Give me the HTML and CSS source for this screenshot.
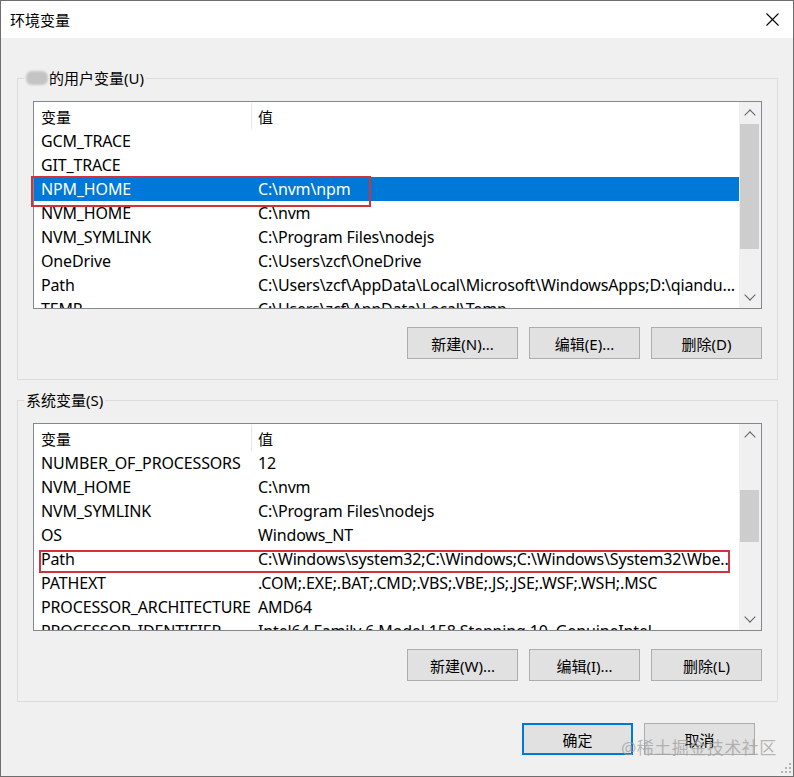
FILE: index.html
```html
<!DOCTYPE html>
<html lang="zh-CN">
<head>
  <meta charset="UTF-8" />
  <title>环境变量</title>
  <link rel="stylesheet" href="styles.css">
</head>
<body>
  <div class="window">
    <div class="titlebar">
      <span class="title">环境变量</span>
      <span class="close">
        <svg width="13" height="13" viewBox="0 0 13 13"><path d="M0.5 0.5 L12.5 12.5 M12.5 0.5 L0.5 12.5" stroke="#000" stroke-width="1.1" fill="none"/></svg>
      </span>
    </div>

    <div class="content">
      <!-- user variables -->
      <fieldset class="group">
        <legend><span class="blur-name"></span>的用户变量(<u>U</u>)</legend>
        <div class="list">
          <div class="list-body">
            <div class="list-head">
              <div class="cell">变量</div>
              <div class="cell sep">值</div>
            </div>
            <div class="row"><div class="cell">GCM_TRACE</div><div class="cell"></div></div>
            <div class="row"><div class="cell">GIT_TRACE</div><div class="cell"></div></div>
            <div class="row selected"><div class="cell">NPM_HOME</div><div class="cell">C:\nvm\npm</div></div>
            <div class="row"><div class="cell">NVM_HOME</div><div class="cell">C:\nvm</div></div>
            <div class="row"><div class="cell">NVM_SYMLINK</div><div class="cell">C:\Program Files\nodejs</div></div>
            <div class="row"><div class="cell">OneDrive</div><div class="cell">C:\Users\zcf\OneDrive</div></div>
            <div class="row"><div class="cell">Path</div><div class="cell">C:\Users\zcf\AppData\Local\Microsoft\WindowsApps;D:\qiandu...</div></div>
            <div class="row"><div class="cell">TEMP</div><div class="cell">C:\Users\zcf\AppData\Local\Temp</div></div>
          </div>
          <div class="scrollbar">
            <div class="arrow up"></div>
            <div class="thumb thumb-user"></div>
            <div class="arrow down"></div>
          </div>
          <div class="mark mark-user"></div>
        </div>
        <div class="buttons">
          <button class="btn">新建(<u>N</u>)...</button>
          <button class="btn">编辑(<u>E</u>)...</button>
          <button class="btn">删除(<u>D</u>)</button>
        </div>
      </fieldset>

      <!-- system variables -->
      <fieldset class="group group-system">
        <legend>系统变量(<u>S</u>)</legend>
        <div class="list">
          <div class="list-body">
            <div class="list-head">
              <div class="cell">变量</div>
              <div class="cell sep">值</div>
            </div>
            <div class="row"><div class="cell">NUMBER_OF_PROCESSORS</div><div class="cell">12</div></div>
            <div class="row"><div class="cell">NVM_HOME</div><div class="cell">C:\nvm</div></div>
            <div class="row"><div class="cell">NVM_SYMLINK</div><div class="cell">C:\Program Files\nodejs</div></div>
            <div class="row"><div class="cell">OS</div><div class="cell">Windows_NT</div></div>
            <div class="row"><div class="cell">Path</div><div class="cell">C:\Windows\system32;C:\Windows;C:\Windows\System32\Wbe..</div></div>
            <div class="row"><div class="cell">PATHEXT</div><div class="cell">.COM;.EXE;.BAT;.CMD;.VBS;.VBE;.JS;.JSE;.WSF;.WSH;.MSC</div></div>
            <div class="row"><div class="cell">PROCESSOR_ARCHITECTURE</div><div class="cell">AMD64</div></div>
            <div class="row"><div class="cell">PROCESSOR_IDENTIFIER</div><div class="cell">Intel64 Family 6 Model 158 Stepping 10, GenuineIntel</div></div>
          </div>
          <div class="scrollbar">
            <div class="arrow up"></div>
            <div class="thumb thumb-system"></div>
            <div class="arrow down"></div>
          </div>
          <div class="mark mark-system"></div>
        </div>
        <div class="buttons">
          <button class="btn">新建(<u>W</u>)...</button>
          <button class="btn">编辑(<u>I</u>)...</button>
          <button class="btn">删除(<u>L</u>)</button>
        </div>
      </fieldset>

      <div class="footer">
        <button class="btn btn-default">确定</button>
        <button class="btn">取消</button>
      </div>
    </div>

    <div class="watermark">@稀土掘金技术社区</div>
    <svg class="grip" width="10" height="10" viewBox="0 0 10 10">
      <rect x="8" y="0" width="2" height="2" fill="#b4b4b4"/>
      <rect x="4" y="4" width="2" height="2" fill="#b4b4b4"/>
      <rect x="8" y="4" width="2" height="2" fill="#b4b4b4"/>
      <rect x="0" y="8" width="2" height="2" fill="#b4b4b4"/>
      <rect x="4" y="8" width="2" height="2" fill="#b4b4b4"/>
      <rect x="8" y="8" width="2" height="2" fill="#b4b4b4"/>
    </svg>
  </div>
</body>
</html>
```

FILE: styles.css
```css
body {
  margin: 0;
  font-family: 'Noto Sans', 'Noto Sans CJK SC', sans-serif;
  font-size: 15px;
  color: #000;
  background: #fff;
}
u {
  text-decoration: none;
}
.window {
  position: relative;
  width: 794px;
  height: 777px;
  box-sizing: border-box;
  border: 1px solid #6e6e6e;
  background-color: #f0f0f0;
  overflow: hidden;
}
.titlebar {
  height: 37px;
  background-color: #fff;
  display: flex;
  align-items: center;
  justify-content: space-between;
  padding-left: 9px;
}
.title {
  font-size: 15px;
  line-height: 20px;
}
.close {
  width: 42px;
  height: 37px;
  display: flex;
  align-items: center;
  justify-content: center;
}
.content {
  padding: 30px 15px 0 16px;
}
.group {
  margin: 0;
  padding: 0 15px 20px 15px;
  border: 1px solid #dcdcdc;
  min-width: 0;
}
.group legend {
  margin-left: -9px;
  padding: 0 2px;
  font-size: 15px;
  line-height: 20px;
  display: flex;
  align-items: center;
}
.group-system {
  margin-top: 10px;
}
.blur-name {
  display: inline-block;
  width: 22px;
  height: 14px;
  margin-right: 1px;
  background-color: #c4c4c4;
  border-radius: 6px;
  filter: blur(1.2px);
}
.list {
  position: relative;
  margin-top: 13px;
  height: 208px;
  box-sizing: border-box;
  border: 1px solid #828790;
  background-color: #fff;
  display: flex;
}
.list-body {
  flex: 1;
  overflow: hidden;
}
.list-head, .row {
  display: grid;
  grid-template-columns: 217px 1fr;
  align-items: center;
}
.list-head {
  height: 27px;
  font-size: 15px;
}
.list-head .cell {
  padding-top: 2px;
}
.list-head .sep {
  border-left: 1px solid #e5e5e5;
  height: 24px;
  padding-left: 6px;
  display: flex;
  align-items: center;
}
.row {
  height: 24px;
  font-size: 16px;
  letter-spacing: -0.15px;
}
.cell {
  padding-left: 7px;
  white-space: nowrap;
  overflow: hidden;
}
.row.selected {
  background-color: #0078d7;
  color: #fff;
}
.scrollbar {
  width: 22px;
  background-color: #f0f0f0;
  display: flex;
  flex-direction: column;
}
.arrow {
  height: 22px;
  display: flex;
  align-items: center;
  justify-content: center;
}
.arrow::before {
  content: '';
  width: 7px;
  height: 7px;
  border-left: 1.5px solid #606060;
  border-top: 1.5px solid #606060;
}
.arrow.up::before {
  transform: translateY(2px) rotate(45deg);
}
.arrow.down {
  margin-top: auto;
}
.arrow.down::before {
  transform: translateY(-2px) rotate(225deg);
}
.thumb {
  margin: 0 2px 0 1px;
  background-color: #cdcdcd;
}
.thumb-user {
  height: 125px;
}
.thumb-system {
  margin-top: 44px;
  height: 52px;
}
.mark {
  position: absolute;
  box-sizing: border-box;
  border: 2px solid #d2323a;
}
.mark-user {
  left: -3px;
  top: 74px;
  width: 340px;
  height: 31px;
}
.mark-system {
  left: 5px;
  top: 126px;
  width: 691px;
  height: 23px;
}
.buttons {
  display: flex;
  justify-content: flex-end;
  gap: 11px;
  margin-top: 18px;
}
.btn {
  width: 111px;
  height: 32px;
  box-sizing: border-box;
  border: 1px solid #adadad;
  background-color: #e1e1e1;
  font-family: inherit;
  font-size: 15px;
  color: #000;
  padding: 0;
}
.footer {
  display: flex;
  justify-content: flex-end;
  gap: 11px;
  margin-top: 21px;
  margin-right: 23px;
}
.btn-default {
  border: 2px solid #0078d7;
}
.watermark {
  position: absolute;
  left: 620px;
  top: 733px;
  font-size: 17px;
  color: rgba(160, 160, 160, 0.75);
  letter-spacing: 0.5px;
}
.grip {
  position: absolute;
  right: 2px;
  bottom: 3px;
}
```
